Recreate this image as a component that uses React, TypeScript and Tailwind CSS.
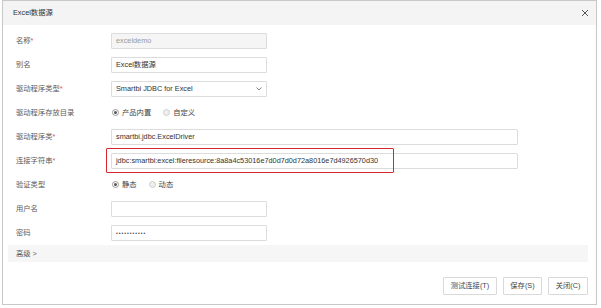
import React from "react";

const FONT = "font-['Liberation_Sans','Noto_Sans_CJK_SC',sans-serif]";

function Label({ text, required }: { text: string; required?: boolean }) {
  return (
    <div className="w-[108px] shrink-0 pl-[13px] text-[#5c5c5c]">
      {text}
      {required && <span className="text-[#e0575b]">*</span>}
    </div>
  );
}

function TextBox({
  value,
  wide,
  disabled,
}: {
  value: string;
  wide?: boolean;
  disabled?: boolean;
}) {
  return (
    <div
      className={`h-[16px] flex items-center pl-[4px] border border-[#dcdcdc] rounded-[1px] ${
        wide ? "w-[407px]" : "w-[156px]"
      } ${disabled ? "bg-[#f5f5f5] text-[#999]" : "bg-white text-[#333]"}`}
    >
      {value}
    </div>
  );
}

function Radio({ label, checked }: { label: string; checked?: boolean }) {
  return (
    <div className="flex items-center gap-[3px] mr-[12px]">
      <span
        className={`w-[7px] h-[7px] rounded-full border flex items-center justify-center ${
          checked ? "border-[#9a9a9a]" : "border-[#cfcfcf] bg-[#eee]"
        }`}
      >
        {checked && <span className="w-[3px] h-[3px] rounded-full bg-[#555]" />}
      </span>
      <span className="text-[#444]">{label}</span>
    </div>
  );
}

function Row({ children }: { children: React.ReactNode }) {
  return <div className="h-[24px] flex items-center">{children}</div>;
}

export default function App() {
  return (
    <div className={`w-[601px] h-[308px] bg-white ${FONT} text-[7.3px] leading-none`}>
      <div className="ml-[2px] w-[595px] h-[305px] border border-[#c8c8c8] flex flex-col relative">
        <header className="h-[24px] bg-[#f4f4f4] flex items-center justify-between pl-[10px] pr-[7px]">
          <span className="text-[#333]">Excel数据源</span>
          <svg width="8" height="8" viewBox="0 0 8 8">
            <path d="M1 1L7 7M7 1L1 7" stroke="#555" strokeWidth="1" />
          </svg>
        </header>

        <div className="pt-[4px] flex flex-col">
          <Row>
            <Label text="名称" required />
            <TextBox value="exceldemo" disabled />
          </Row>
          <Row>
            <Label text="别名" />
            <TextBox value="Excel数据源" />
          </Row>
          <Row>
            <Label text="驱动程序类型" required />
            <div className="w-[156px] h-[16px] flex items-center justify-between pl-[4px] pr-[4px] border border-[#dcdcdc] rounded-[1px] text-[#333]">
              <span>Smartbi JDBC for Excel</span>
              <svg width="6" height="4" viewBox="0 0 6 4">
                <path d="M0.5 0.5L3 3L5.5 0.5" stroke="#666" strokeWidth="0.8" fill="none" />
              </svg>
            </div>
          </Row>
          <Row>
            <Label text="驱动程序存放目录" />
            <div className="flex items-center pl-[1px]">
              <Radio label="产品内置" checked />
              <Radio label="自定义" />
            </div>
          </Row>
          <Row>
            <Label text="驱动程序类" required />
            <TextBox value="smartbi.jdbc.ExcelDriver" wide />
          </Row>
          <Row>
            <Label text="连接字符串" required />
            <TextBox
              value="jdbc:smartbi:excel:fileresource:8a8a4c53016e7d0d7d0d72a8016e7d4926570d30"
              wide
            />
          </Row>
          <Row>
            <Label text="验证类型" />
            <div className="flex items-center pl-[1px]">
              <Radio label="静态" checked />
              <Radio label="动态" />
            </div>
          </Row>
          <Row>
            <Label text="用户名" />
            <TextBox value="" />
          </Row>
          <Row>
            <Label text="密码" />
            <div className="w-[156px] h-[16px] flex items-center pl-[4px] border border-[#dcdcdc] rounded-[1px] text-[#444] text-[5px] tracking-[1px]">
              •••••••••••
            </div>
          </Row>
        </div>

        <div className="mx-[5px] mr-[8px] h-[17px] bg-[#f6f6f6] flex items-center pl-[8px] text-[#5c5c5c]">
          高级 &gt;
        </div>

        <div className="mt-auto mb-[9px] pr-[8px] flex justify-end gap-[6px]">
          <button className="h-[18px] w-[54px] border border-[#d9d9d9] bg-white text-[#444] rounded-[1px]">
            测试连接(T)
          </button>
          <button className="h-[18px] w-[39px] border border-[#d9d9d9] bg-white text-[#444] rounded-[1px]">
            保存(S)
          </button>
          <button className="h-[18px] w-[40px] border border-[#d9d9d9] bg-white text-[#444] rounded-[1px]">
            关闭(C)
          </button>
        </div>

        {/* annotation around connection string */}
        <div className="absolute left-[103px] top-[147px] w-[288px] h-[25px] border-[1.5px] border-[#d8262e] rounded-[1px]" />
      </div>
    </div>
  );
}
